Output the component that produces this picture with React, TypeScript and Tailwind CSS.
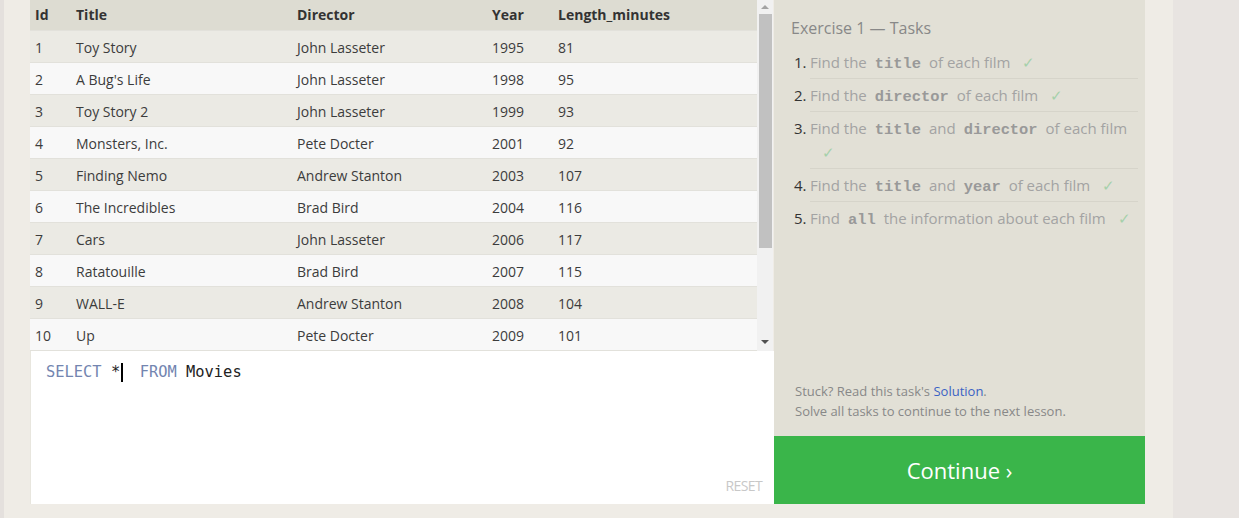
import React from 'react'

type Movie = {
  id: number
  title: string
  director: string
  year: number
  length: number
}

const movies: Movie[] = [
  { id: 1, title: 'Toy Story', director: 'John Lasseter', year: 1995, length: 81 },
  { id: 2, title: "A Bug's Life", director: 'John Lasseter', year: 1998, length: 95 },
  { id: 3, title: 'Toy Story 2', director: 'John Lasseter', year: 1999, length: 93 },
  { id: 4, title: 'Monsters, Inc.', director: 'Pete Docter', year: 2001, length: 92 },
  { id: 5, title: 'Finding Nemo', director: 'Andrew Stanton', year: 2003, length: 107 },
  { id: 6, title: 'The Incredibles', director: 'Brad Bird', year: 2004, length: 116 },
  { id: 7, title: 'Cars', director: 'John Lasseter', year: 2006, length: 117 },
  { id: 8, title: 'Ratatouille', director: 'Brad Bird', year: 2007, length: 115 },
  { id: 9, title: 'WALL-E', director: 'Andrew Stanton', year: 2008, length: 104 },
  { id: 10, title: 'Up', director: 'Pete Docter', year: 2009, length: 101 },
]

const Code = ({ children }: { children: React.ReactNode }) => (
  <span className="font-['Liberation_Mono',monospace] font-bold text-[#999] text-[15.4px] leading-[0] mx-[8px]">
    {children}
  </span>
)

const Check = () => <span className="text-[#a6d0ab] leading-[0] ml-[12px]">✓</span>

const tasks: React.ReactNode[] = [
  <>Find the<Code>title</Code>of each film<Check /></>,
  <>Find the<Code>director</Code>of each film<Check /></>,
  <>Find the<Code>title</Code>and<Code>director</Code>of each film <span className="ml-[4px]" /><Check /></>,
  <>Find the<Code>title</Code>and<Code>year</Code>of each film<Check /></>,
  <>Find<Code>all</Code>the information about each film<Check /></>,
]

function Row({ m, header }: { m?: Movie; header?: boolean }) {
  const cells = header
    ? ['Id', 'Title', 'Director', 'Year', 'Length_minutes']
    : [m!.id, m!.title, m!.director, m!.year, m!.length]
  const bg = header
    ? 'bg-[#dddcd2] font-bold text-[#333] h-[31px] pb-[2px]'
    : m!.id % 2 === 1
      ? 'bg-[#ebeae4] h-[32px] pt-[1px]'
      : 'bg-[#f8f8f8] h-[32px] pt-[1px]'
  return (
    <div className={`flex items-center px-[5px] border-b border-[#e2e1db] ${bg}`}>
      <div className="w-[41px]">{cells[0]}</div>
      <div className="w-[221px]">{cells[1]}</div>
      <div className="w-[195px]">{cells[2]}</div>
      <div className="w-[66px]">{cells[3]}</div>
      <div className="flex-1">{cells[4]}</div>
    </div>
  )
}

export default function App() {
  return (
    <div className="flex w-[1239px] h-[518px] bg-[#efece6] font-['Open_Sans',sans-serif] overflow-hidden">
      <div className="w-[4px] bg-[#e4e0dd]" />
      <div className="w-[26px]" />

      <div className="w-[744px] flex flex-col">
        <div className="flex h-[351px] bg-white">
          <div className="flex-1 text-[14px] text-[#3c3c3c]">
            <Row header />
            {movies.map((m) => (
              <Row key={m.id} m={m} />
            ))}
          </div>
          <div className="w-[16px] bg-[#f1f1f1] flex flex-col items-center">
            <div className="h-[14px] flex items-center justify-center">
              <div className="w-0 h-0 border-l-[4px] border-r-[4px] border-b-[4px] border-l-transparent border-r-transparent border-b-[#a3a3a3]" />
            </div>
            <div className="w-[13px] h-[234px] bg-[#c1c1c1]" />
            <div className="flex-1" />
            <div className="h-[18px] flex items-center justify-center">
              <div className="w-0 h-0 border-l-[4px] border-r-[4px] border-t-[4px] border-l-transparent border-r-transparent border-t-[#505050]" />
            </div>
          </div>
          <div className="w-[1px] bg-[#efece6]" />
        </div>

        <div className="h-[153px] bg-white border-l border-[#e8e6de] flex flex-col justify-between">
          <div className="pl-[15px] pt-[11px] font-['DejaVu_Sans_Mono',monospace] text-[15.4px] leading-[20px] whitespace-pre">
            <span className="text-[#7385b0]">SELECT</span>
            <span className="text-[#222]"> *</span>
            <span className="inline-block w-[2px] h-[19px] bg-black align-middle ml-[1px] -mr-[2px]" />
            <span>  </span>
            <span className="text-[#7385b0]">FROM</span>
            <span className="text-[#222]"> Movies</span>
          </div>
          <div className="self-end pr-[12px] pb-[8px] text-[14px] text-[#c8c8c8] tracking-[-0.6px]">RESET</div>
        </div>
      </div>

      <div className="w-[371px] h-[504px] flex flex-col bg-[#e2e0d6]">
        <div className="flex-1 pl-[17px] pr-[7px] pt-[16px]">
          <div className="text-[16px] text-[#888] leading-[24px]">Exercise 1 — Tasks</div>
          <div className="mt-[6px] text-[15px] leading-[24px]">
            {tasks.map((t, i) => (
              <div key={i} className="flex">
                <div className="w-[16px] ml-[3px] pt-[4px] text-[#333]">{i + 1}.</div>
                <div className={`flex-1 pt-[4px] pb-[4px] text-[#a3a3a3] ${i < 4 ? 'border-b border-[#d6d4ca]' : ''}`}>
                  {t}
                </div>
              </div>
            ))}
          </div>
        </div>
        <div className="px-[21px] pb-[15px] text-[13px] leading-[20px] text-[#888]">
          <div>
            Stuck? Read this task's <span className="text-[#3a62c4]">Solution</span>.
          </div>
          <div>Solve all tasks to continue to the next lesson.</div>
        </div>
        <div className="h-[68px] bg-[#3ab54a] flex items-center justify-center text-white text-[22px]">
          Continue ›
        </div>
      </div>

      <div className="w-[28px]" />
      <div className="flex-1 bg-[#e8e4e1]" />
    </div>
  )
}
